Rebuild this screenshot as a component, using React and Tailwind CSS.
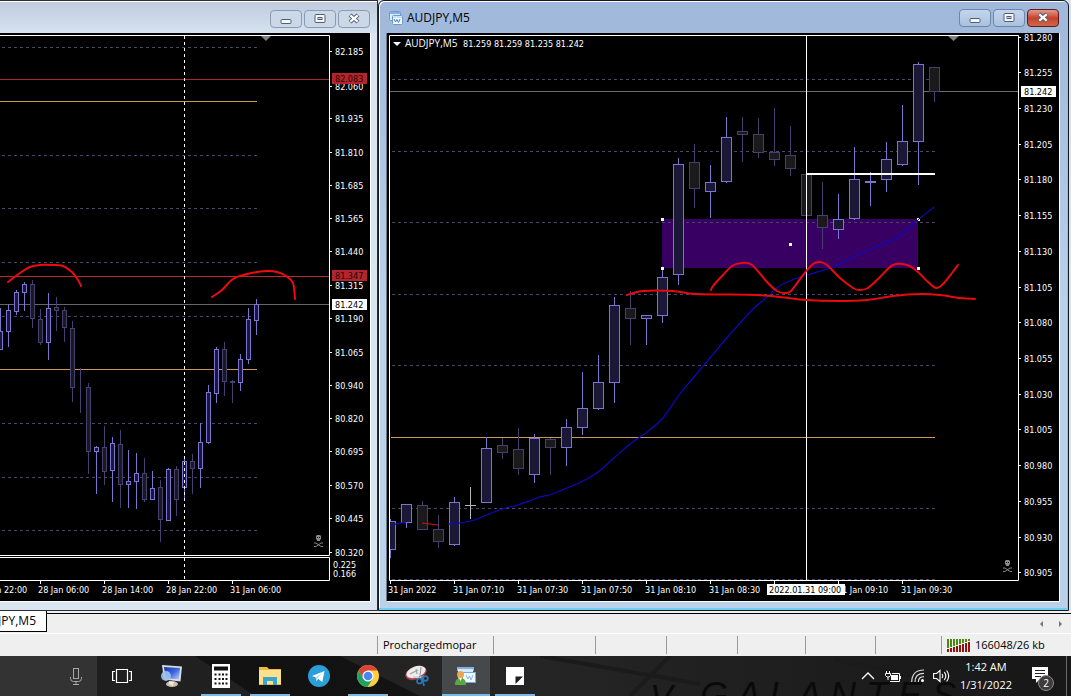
import React from "react";

const LEFT_CANDLES = [
  [0, 308, 331, 349, 349, 1], [8, 304, 310, 331, 347, 1], [16, 290, 292, 311, 315, 1],
  [24, 282, 284, 292, 311, 1], [32, 280, 284, 318, 328, 0], [40, 309, 319, 342, 345, 0],
  [48, 293, 308, 342, 360, 1], [56, 297, 307, 310, 331, 0], [64, 307, 310, 327, 342, 0],
  [72, 321, 328, 387, 402, 0], [80, 368, 386, 386, 413, 0], [88, 383, 387, 451, 474, 0],
  [96, 446, 447, 451, 494, 1], [104, 426, 447, 471, 485, 0], [112, 437, 443, 470, 502, 1],
  [120, 430, 444, 484, 508, 0], [128, 450, 481, 484, 508, 1], [136, 453, 473, 481, 509, 1],
  [144, 458, 473, 499, 502, 0], [152, 471, 488, 499, 499, 1], [160, 480, 487, 519, 542, 0],
  [168, 468, 469, 520, 520, 1], [176, 466, 469, 499, 516, 0], [184, 456, 461, 487, 499, 1],
  [192, 454, 461, 468, 494, 0], [200, 423, 442, 468, 488, 1], [208, 385, 392, 442, 444, 1],
  [216, 347, 349, 393, 403, 1], [224, 342, 349, 381, 396, 0], [232, 380, 381, 382, 403, 0],
  [240, 354, 359, 382, 391, 1], [248, 308, 319, 359, 364, 1], [256, 299, 304, 320, 335, 1],
];

const RIGHT_CANDLES = [
  [390, 519, 521, 549, 558, 1], [406, 504, 504, 522, 528, 1], [422, 501, 505, 529, 529, 0],
  [438, 515, 529, 541, 548, 0], [454, 497, 502, 544, 546, 1], [486, 437, 448, 502, 502, 1],
  [502, 438, 445, 452, 459, 0], [518, 428, 449, 468, 475, 0], [534, 434, 438, 474, 483, 1],
  [550, 438, 439, 447, 475, 0], [566, 419, 427, 447, 466, 1], [582, 372, 408, 427, 435, 1],
  [598, 355, 382, 408, 410, 1], [614, 297, 305, 382, 403, 1], [630, 291, 308, 318, 345, 0],
  [646, 315, 315, 318, 345, 1], [662, 268, 277, 315, 323, 1], [678, 158, 164, 274, 285, 1],
  [694, 144, 162, 188, 208, 0], [710, 165, 182, 191, 218, 1], [726, 117, 137, 181, 183, 1],
  [742, 117, 131, 134, 162, 0], [758, 118, 134, 152, 158, 0], [774, 108, 152, 159, 166, 0],
  [790, 126, 155, 168, 176, 0], [806, 174, 174, 215, 215, 0], [822, 182, 215, 227, 249, 0],
  [838, 194, 219, 229, 239, 1], [854, 147, 179, 218, 220, 1], [870, 172, 181, 182, 206, 1],
  [886, 142, 159, 179, 192, 1], [902, 105, 141, 164, 166, 1], [918, 62, 64, 141, 185, 1],
  [934, 67, 67, 91, 102, 0],
];

const LEFT_PRICES = [
  ["82.185", 51], ["82.060", 86], ["81.935", 118], ["81.810", 152], ["81.685", 185],
  ["81.565", 218], ["81.440", 251], ["81.315", 285], ["81.190", 318], ["81.065", 352],
  ["80.940", 385], ["80.820", 418], ["80.695", 451], ["80.570", 485], ["80.445", 518], ["80.320", 552],
];

const RIGHT_PRICES = [
  ["81.280", 37], ["81.255", 72], ["81.230", 108], ["81.205", 144], ["81.180", 179],
  ["81.155", 215], ["81.130", 251], ["81.105", 287], ["81.080", 322], ["81.055", 358],
  ["81.030", 394], ["81.005", 429], ["80.980", 465], ["80.955", 501], ["80.930", 537], ["80.905", 572],
];

/* Smooth curve through a list of points (Catmull-Rom to Bezier). */
function curve(p) {
  let d = `M${p[0][0]} ${p[0][1]}`;
  for (let i = 0; i < p.length - 1; i++) {
    const a = p[i - 1] || p[i];
    const b = p[i];
    const c = p[i + 1];
    const e = p[i + 2] || c;
    d += `C${b[0] + (c[0] - a[0]) / 6} ${b[1] + (c[1] - a[1]) / 6} ${c[0] - (e[0] - b[0]) / 6} ${c[1] - (e[1] - b[1]) / 6} ${c[0]} ${c[1]}`;
  }
  return d;
}

function Candles({ data, half }) {
  return data.map(([x, high, top, bottom, low, up]) => {
    const stroke = up ? "#7d74cf" : "#454070";
    return (
      <g key={x} stroke={stroke} shapeRendering="crispEdges">
        <path d={`M${x + 0.5} ${high}V${top}M${x + 0.5} ${bottom}V${low}`} />
        <rect x={x + 0.5 - half} y={top + 0.5} width={half * 2} height={bottom - top} fill={up ? "#1b1738" : "#1a1a1c"} />
      </g>
    );
  });
}

function Grid({ rows, x1, x2 }) {
  return rows.map((y) => (
    <path key={y} d={`M${x1} ${y + 0.5}H${x2}`} stroke="#47476a" strokeDasharray="3 3" />
  ));
}

function Prices({ data, x }) {
  return data.map(([label, y]) => (
    <g key={label}>
      <path d={`M${x - 5} ${y + 0.5}h2`} stroke="#fff" />
      <text x={x} y={y + 4} fill="#fff">{label}</text>
    </g>
  ));
}

function PriceTag({ x, y, label, bg, fg }) {
  return (
    <g>
      <rect x={x - 3} y={y - 6} width="35" height="11" fill={bg} />
      <text x={x} y={y + 3} fill={fg}>{label}</text>
    </g>
  );
}

function Skull({ x, y }) {
  return (
    <g transform={`translate(${x} ${y})`}>
      <path d="M3 0h3l1 1v3l-1 1v1H3V5L2 4V1z" fill="#8a8a8a" />
      <path d="M3 2h1v1H3zM5 2h1v1H5z" fill="#000" />
      <path d="M0 8h2l5 3.500h2M9 8H7l-5 3.500H0" stroke="#858585" fill="none" />
    </g>
  );
}

const chartClass = "block h-auto w-full bg-black [font-family:'DejaVu_Sans_Condensed','DejaVu_Sans',sans-serif] text-[9px]";

function LeftChart() {
  return (
    <svg viewBox="0 33 370 568" className={chartClass} fill="none" role="img" aria-label="Price chart">
      <Grid rows={[47, 155, 208, 262, 316, 423, 477, 530]} x1={2} x2={257} />
      <path d="M0 79.500H330" stroke="#a8282f" />
      <path d="M0 276.500H330" stroke="#b8282f" />
      <path d="M0 101.500H257" stroke="#cc9a58" />
      <path d="M0 369.500H257" stroke="#cc9a58" />
      <path d="M0 304.500H330" stroke="#666" />
      <Candles data={LEFT_CANDLES} half={2} />
      <path d="M184.500 36V579" stroke="#fff" strokeDasharray="3 3" />
      <path d="M0 35.500H329.500V555.500H0M0 557.500H329.500V580.500H0M40.500 581v3M104.500 581v3M168.500 581v3M232.500 581v3" stroke="#fff" />
      <path d="M261 36h10l-5 5z" fill="#808080" />
      <Skull x={314} y={535} />
      <Prices data={LEFT_PRICES} x={335} />
      <g fill="#fff">
        <text x="333" y="568">0.225</text>
        <text x="333" y="577">0.166</text>
        <text x="-24" y="593">27 Jan 22:00</text>
        <text x="38" y="593">28 Jan 06:00</text>
        <text x="102" y="593">28 Jan 14:00</text>
        <text x="166" y="593">28 Jan 22:00</text>
        <text x="230" y="593">31 Jan 06:00</text>
      </g>
      <PriceTag x={335} y={79} label="82.083" bg="#b3252b" fg="#2a0406" />
      <PriceTag x={335} y={276} label="81.347" bg="#b3252b" fg="#2a0406" />
      <PriceTag x={335} y={305} label="81.242" bg="#fff" fg="#000" />
      <g stroke="#f00a0f" strokeWidth="2" strokeLinecap="round">
        <path d={curve([[8, 282], [20, 273], [30, 267], [40, 265], [53, 265], [63, 266], [72, 272], [78, 280], [81, 286]])} />
        <path d={curve([[212, 297], [222, 290], [233, 279], [247, 274], [267, 271], [277, 272], [286, 276], [293, 283], [295, 299]])} />
      </g>
    </svg>
  );
}

function RightChart() {
  return (
    <svg viewBox="387 33 672 568" className={chartClass} fill="none" role="img" aria-label="AUDJPY five minute chart">
      <rect x="662" y="219" width="256" height="49" fill="#380063" />
      <Grid rows={[79, 151, 222, 294, 365, 508, 579]} x1={392} x2={935} />
      <path d="M390 91.500H1018" stroke="#6c6c6c" />
      <path d="M391 437.500H935" stroke="#cc9a58" />
      <Candles data={RIGHT_CANDLES} half={5} />
      <rect x="384" y="500" width="5" height="70" fill="#000" />
      <path d="M470.500 487V519M465 505.500h11" stroke="#b5b5b5" shapeRendering="crispEdges" />
      <g stroke="#0d08c4" strokeWidth="1.200">
        <path d={curve([[390, 525], [396, 524], [406, 522]])} />
        <path d={curve([[448, 524], [471, 521], [502, 509], [518, 505], [537, 498], [552, 494], [567, 488], [583, 481], [598, 472], [615, 457], [630, 444], [647, 432], [663, 418], [679, 395], [694, 377], [710, 358], [726, 339], [742, 321], [752, 310], [767, 297], [778, 287], [792, 280], [807, 275], [833, 267], [847, 260], [880, 245], [898, 237], [918, 220], [934, 207]])} />
      </g>
      <path d="M422 523l16 2" stroke="#d0101c" strokeWidth="1.200" />
      <path d="M806.500 36V580" stroke="#fff" />
      <path d="M807 174H935" stroke="#fff" strokeWidth="2" />
      <path d="M661 218h3v3h-3zM661 267h3v3h-3zM917 218h3v3h-3zM917 267h3v3h-3zM789 243h3v3h-3z" fill="#fff" />
      <path d="M917 221l3-3" stroke="#0b0614" />
      <path d="M389.500 580.500V35.500H1018.500V580.500zM390.500 581v3M454.500 581v3M518.500 581v3M582.500 581v3M646.500 581v3M710.500 581v3M774.500 581v3M838.500 581v3M902.500 581v3" stroke="#fff" />
      <path d="M948 36h11l-5.500 5z" fill="#808080" />
      <Skull x={1003} y={560} />
      <path d="M393 42h8l-4 4z" fill="#fff" />
      <Prices data={RIGHT_PRICES} x={1024} />
      <PriceTag x={1024} y={92} label="81.242" bg="#fff" fg="#000" />
      <g fill="#fff">
        <text x="405" y="47" className="[font-family:'Open_Sans',sans-serif] text-[10px]">AUDJPY,M5</text>
        <text x="463" y="47">81.259 81.259 81.235 81.242</text>
        <text x="388" y="593">31 Jan 2022</text>
        <text x="453" y="593">31 Jan 07:10</text>
        <text x="517" y="593">31 Jan 07:30</text>
        <text x="581" y="593">31 Jan 07:50</text>
        <text x="645" y="593">31 Jan 08:10</text>
        <text x="709" y="593">31 Jan 08:30</text>
        <text x="837" y="593">31 Jan 09:10</text>
        <text x="901" y="593">31 Jan 09:30</text>
      </g>
      <rect x="767" y="584" width="78" height="11" fill="#fff" />
      <text x="769" y="593" fill="#000">2022.01.31 09:00</text>
      <g stroke="#e80a0f" strokeWidth="2" strokeLinecap="round">
        <path d={curve([[711, 290], [713, 286], [722, 276], [732, 266], [742, 263], [752, 265], [767, 282], [777, 291], [784, 293], [791, 291], [803, 275], [813, 264], [820, 262], [827, 265], [840, 278], [853, 288], [859, 290], [868, 288], [880, 277], [893, 265], [907, 265], [918, 272], [927, 281], [936, 288], [943, 284], [952, 273], [958, 265]])} />
        <path d={curve([[627, 295], [643, 291], [673, 291], [697, 294], [757, 295], [780, 297], [807, 300], [837, 301], [867, 300], [893, 296], [920, 294], [940, 295], [960, 298], [975, 299]])} />
      </g>
    </svg>
  );
}

function WindowButtons({ active }) {
  const base = "flex h-[18px] w-8 items-center justify-center rounded-sm border";
  const plain = active
    ? `${base} border-[#6f86a8] bg-linear-to-b from-[#c3d5ec] to-[#a9c2e0]`
    : `${base} border-[#8a9bb5] bg-[#cbd8e8]`;
  const close = active
    ? `${base} border-[#5c1a1c] bg-linear-to-b from-[#e09a8c] via-[#c5402a] to-[#d0684a]`
    : plain;
  return (
    <div className="flex gap-0.5">
      <button className={plain} aria-label="Minimize">
        <svg width="12" height="12"><rect x="1" y="6.500" width="10" height="4" rx="1" fill="#f5f8fc" stroke="#535d70" /></svg>
      </button>
      <button className={plain} aria-label="Restore">
        <svg width="12" height="12" fill="#f5f8fc" stroke="#535d70"><rect x="1" y="1.500" width="10" height="8" rx="1" /><rect x="4" y="4.500" width="4" height="2" fill="#b9cbe2" /></svg>
      </button>
      <button className={close} aria-label="Close">
        <svg width="14" height="12"><path d="M3 2l8 7M11 2l-8 7" stroke="#535d70" strokeWidth="4.200" /><path d="M3.300 2.300l7.400 6.400M10.700 2.300l-7.400 6.400" stroke="#fff" strokeWidth="2.200" /></svg>
      </button>
    </div>
  );
}

function ChartGlyph() {
  return (
    <svg width="14" height="14" viewBox="0 0 14 14" fill="none" aria-hidden="true">
      <rect x=".5" y=".5" width="11" height="9" rx="1" fill="#dceafa" stroke="#6b9bd2" />
      <path d="M1 2h10" stroke="#6b9bd2" strokeWidth="1.500" />
      <rect x="3.500" y="4.500" width="10" height="9" rx="1" fill="#f4f9ff" stroke="#6b9bd2" />
      <path d="M4 6h9" stroke="#a5c8ec" />
      <path d="M5 8l1.500 3L8 8.500l1.500 3L11 8" stroke="#4a80c0" />
    </svg>
  );
}

const icons = {
  "Task View": (
    <svg width="20" height="16" fill="none" stroke="#fff" strokeWidth="1.200"><path d="M4.500 1.500h11v13h-11zM3 3.500H.6v9H3M17 3.500h2.400v9H17" /></svg>
  ),
  Computer: (
    <svg width="24" height="24" viewBox="0 0 24 24">
      <defs><linearGradient id="scr" x2="1" y2="1"><stop stopColor="#1b35a8" /><stop offset=".5" stopColor="#3c63e0" /><stop offset="1" stopColor="#c2d6fa" /></linearGradient></defs>
      <path d="M2 1l20 1.500-1.500 15L4 15.500z" fill="#d7dde8" /><path d="M4 3l16 1-1.200 11.500L5.500 14z" fill="url(#scr)" />
      <circle cx="6" cy="12" r="5" fill="#9fc3ee" opacity=".9" /><ellipse cx="12" cy="20" rx="6" ry="3" fill="#cdbfb0" /><path d="M9 17l5 1-1 4-4-2z" fill="#efe8dd" />
    </svg>
  ),
  Calculator: (
    <svg width="18" height="24" viewBox="0 0 18 24"><path d="M0 0h18v24H0z" fill="#fff" /><path d="M2 2.500h14v4H2zM2.500 9.500h2v2h-2zM6.500 9.500h2v2h-2zM10 9.500h2v2h-2zM13.500 9.500h2v2h-2zM2.500 14h2v2h-2zM6.500 14h2v2h-2zM10 14h2v2h-2zM13.500 14h2v2h-2zM2.500 18.500h2v2h-2zM6.500 18.500h2v2h-2zM10 18.500h2v2h-2zM13.500 18.500h2v2h-2z" fill="#111" /></svg>
  ),
  "File Explorer": (
    <svg width="22" height="20" viewBox="0 0 22 20"><path d="M0 1h8l2 2h12v16H0z" fill="#f0b93f" /><path d="M0 4h22v14H0z" fill="#fde08b" /><path d="M4 19v-8h14v8h-4v-4H8v4z" fill="#38a5cf" /></svg>
  ),
  Telegram: (
    <svg width="22" height="22" viewBox="0 0 22 22"><circle cx="11" cy="11" r="11" fill="#2a9fd8" /><path d="M4 11l12.500-5-2.200 11-4-3-2 2-.5-3.500z" fill="#fff" /><path d="M7.800 12.500L14 8l-4.500 5.500-1.200 2.500z" fill="#b4d8ee" /></svg>
  ),
  Chrome: (
    <svg width="22" height="22" viewBox="0 0 22 22"><circle cx="11" cy="11" r="11" fill="#ffcd41" /><path d="M1.500 5.500A11 11 0 0 1 20.500 5.500H11L6.200 13.700z" fill="#db4437" /><path d="M1.500 5.500A11 11 0 0 0 10.500 22L15.700 13.700 6.200 13.700z" fill="#1da261" /><circle cx="11" cy="11" r="5.500" fill="#fff" /><circle cx="11" cy="11" r="4.300" fill="#4687f4" /></svg>
  ),
  "Snipping Tool": (
    <svg width="26" height="24" viewBox="0 0 26 24" fill="none"><ellipse cx="12" cy="9" rx="11" ry="6.500" transform="rotate(-20 12 9)" fill="#a9424b" /><ellipse cx="12" cy="8" rx="10" ry="5.500" transform="rotate(-20 12 8)" fill="#efe9e9" /><path d="M6 10l8-4M12 5l1 5M17 3l-1 9 3 3" stroke="#9aa0a8" strokeWidth="1.200" /><path d="M9 13l8 1 3-2" stroke="#c8ccd2" strokeWidth="1.500" /><circle cx="15.500" cy="17" r="2.500" stroke="#2a78b8" strokeWidth="1.700" /><circle cx="21.500" cy="14.500" r="2.300" stroke="#2a78b8" strokeWidth="1.700" /><path d="M18 13l2 9" stroke="#2a78b8" strokeWidth="1.700" /></svg>
  ),
  MetaTrader: (
    <svg width="22" height="20" viewBox="0 0 22 20" fill="none"><path d="M2 1h17v4H2z" fill="#78b2e8" /><path d="M3 3h15v11H3z" fill="#d7e9fb" /><rect x="7.500" y="6.500" width="13" height="10" fill="#f2f8ff" stroke="#6ea9e2" /><path d="M11 9l2 4 1.500-3 1.500 4 2-5" stroke="#8ab8e8" /><circle cx="5.500" cy="8.500" r="3.500" fill="#eaa64c" /><path d="M0 19c0-5 2-7 5.500-7S11 14 11 19z" fill="#58a83c" /><path d="M4 12l1.500 3L7 12z" fill="#fff" /></svg>
  ),
  "Sticky Notes": (
    <svg width="18" height="18"><path d="M0 0h18v18H0z" fill="#fff" /><path d="M9.500 9.500H17L9.500 17z" fill="#1d1d1d" /></svg>
  ),
};

const OPEN = ["Calculator", "File Explorer", "Chrome", "Sticky Notes"];

function Taskbar() {
  return (
    <footer className="relative flex h-10 overflow-hidden bg-linear-to-r from-[#1e1e1e] via-[#252525] to-[#171717] text-white">
      <div className="absolute inset-0" aria-hidden="true">
        <svg className="h-full w-full" viewBox="0 0 1071 40" preserveAspectRatio="none" fill="none">
          <path d="M195 0H340L420 40H255z" fill="#080808" opacity=".6" />
          <path d="M540 0L700 28M670 0L630 40M835 4L960 28" stroke="#1b1b1b" strokeWidth="4" />
          <text x="650" y="52" fontSize="34" fontStyle="italic" fontFamily="Liberation Sans, sans-serif" fill="#0a0a0a">V</text>
          <text x="700" y="52" fontSize="36" fontStyle="italic" fontFamily="Liberation Sans, sans-serif" fill="#0a0a0a">G A L A N T E S</text>
        </svg>
      </div>
      <div className="relative flex w-[97px] items-center justify-end bg-[#333] pr-3">
        <button aria-label="Voice search" className="flex w-[18px] justify-center">
          <svg width="12" height="17" fill="none" stroke="#a8a8a8"><rect x="3.500" y=".5" width="5" height="10" /><path d="M.5 9v1.500q0 3 3 3h5q3 0 3-3V9M6 13.500V16M3 16.500h6" /></svg>
        </button>
      </div>
      <nav className="relative flex gap-px">
        {Object.entries(icons).map(([name, icon]) => (
          <button
            key={name}
            aria-label={name}
            className={name === "MetaTrader" ? "flex w-12 flex-col items-center bg-[#474849]" : name === "Task View" ? "flex w-[50px] flex-col items-center" : "flex w-12 flex-col items-center"}
          >
            <span className="flex flex-1 items-center">{icon}</span>
            <span className={name === "MetaTrader" ? "-mt-0.5 h-0.5 w-full bg-[#76b9ed]" : OPEN.includes(name) ? "-mt-0.5 h-0.5 w-10 bg-[#76b9ed]" : "-mt-0.5 h-0.5"} />
          </button>
        ))}
      </nav>
      <div className="relative ml-auto flex items-center pr-1">
        <button aria-label="Show hidden icons" className="mr-2.5"><svg width="14" height="8" fill="none" stroke="#fff" strokeWidth="1.300"><path d="M1 7l6-6 6 6" /></svg></button>
        <button aria-label="Battery" className="mr-2.5"><svg width="16" height="13" fill="none" stroke="#fff"><path d="M1.500 1v3M4.500 1v3M.5 3.500h5v2l-1.500 1.500h-2L.5 5.500zM3 7v3M5 11.500h9.500v-8H7M15.500 6v3" /><path d="M6 5h7v5H6z" fill="#fff" stroke="none" /></svg></button>
        <button aria-label="Network" className="mr-2"><svg width="14" height="14" viewBox="0 0 14 14" fill="none" stroke="#d8d8d8" strokeWidth="1.200"><path d="M.7 13Q1 1 13 1M4 13Q4 4.300 13 4.300M7.300 13Q7.300 7.600 13 7.600" /><circle cx="11.500" cy="11.500" r="1.500" fill="#fff" stroke="none" /></svg></button>
        <button aria-label="Volume" className="mr-2.5"><svg width="17" height="14" viewBox="0 0 17 14" fill="none" stroke="#fff" strokeWidth="1.100"><path d="M.6 4.500h3L7 1.500v11L3.600 9.500h-3zM9 5q1.500 2 0 4M11.300 3.200q3 3.800 0 7.600M13.600 1.500q4.200 5.500 0 11" /></svg></button>
        <button className="text-center text-[11px] leading-[18px]">
          <span className="block">1:42 AM</span>
          <span className="block">1/31/2022</span>
        </button>
        <button aria-label="Notifications, 2 new" className="relative mr-3 ml-4 h-[30px] w-[26px]">
          <svg width="18" height="20" className="absolute left-1 top-1" fill="#fff"><path d="M0 2h16v12H8l-4 4v-4H0z" /><path d="M3 5h10v1H3zM3 8h10v1H3zM3 11h6v1H3z" fill="#222" /></svg>
          <span className="absolute right-0 bottom-0 flex size-4 items-center justify-center rounded-full border border-[#8a8a8a] bg-[#3d3d3d] text-[10px] leading-none">2</span>
        </button>
        <span className="h-10 border-l border-[#666]" />
      </div>
    </footer>
  );
}

function Traffic() {
  return (
    <svg width="24" height="13" aria-hidden="true">
      {Array.from({ length: 8 }, (_, i) => (
        <g key={i}>
          <rect x={i * 3} y="0" width="2" height={9 - i} fill="#4c8a12" />
          <rect x={i * 3} y={10 - i} width="2" height={3 + i} fill="#8f1410" />
        </g>
      ))}
    </svg>
  );
}

export default function App() {
  return (
    <div className="flex min-h-screen flex-col bg-[#efefef] text-black [font-family:'Open_Sans','Noto_Sans',sans-serif] text-xs">
      <main className="grid grid-cols-[378fr_693fr] bg-[#d8e3ee]">
        <section className="flex flex-col border-y border-r border-[#2c3036] bg-[#d9e5f0] pr-[6px] pb-2">
          <header className="-mr-[6px] flex h-8 items-center justify-end border-t border-white bg-linear-to-b from-[#c0ccde] to-[#d5e2ef] pt-0.5 pr-[7px]">
            <WindowButtons />
          </header>
          <div className="border-r border-b border-white">
            <LeftChart />
          </div>
        </section>
        <section className="mr-0.5 flex flex-col rounded-t-md border border-[#15191f] bg-linear-to-b from-[#9fb8db] via-[#b9d1ea] to-[#b9d1ea] shadow-[inset_-1px_-2px_0_#6fd0f2,inset_1px_1px_0_#ffffff]">
          <header className="flex h-8 items-center justify-between pt-0.5 pr-[9px] pl-[10px]">
            <h1 className="flex items-center gap-1">
              <ChartGlyph />
              AUDJPY,M5
            </h1>
            <WindowButtons active />
          </header>
          <div className="mr-2 ml-[7px] border-r border-b border-l border-r-white border-b-white border-l-[#6d7885]">
            <RightChart />
          </div>
        </section>
      </main>
      <div className="flex h-[23px] items-start justify-between border-b border-white">
        <button className="flex h-[21px] w-[47px] items-center justify-end overflow-hidden border-r border-b border-black bg-white pr-[10px]">AUDJPY,M5</button>
        <div className="mt-0.5 flex h-5 flex-1 items-center justify-end gap-3 border-t border-black pr-2">
          <button aria-label="Scroll left"><svg width="6" height="8"><path d="M4 1v6L1 4z" fill="#777" /></svg></button>
          <button aria-label="Scroll right"><svg width="6" height="8"><path d="M2 1v6l3-3z" fill="#777" /></svg></button>
        </div>
      </div>
      <div className="grid h-[22px] grid-cols-[377fr_116fr_102fr_71fr_71fr_68fr_70fr_66fr_130fr] py-0.5 text-[11px] leading-[18px]">
        <span />
        <span className="border-l border-[#9a9a9a] pl-[5px]">Prochargedmopar</span>
        <span className="border-l border-[#9a9a9a]" />
        <span className="border-l border-[#9a9a9a]" />
        <span className="border-l border-[#9a9a9a]" />
        <span className="border-l border-[#9a9a9a]" />
        <span className="border-l border-[#9a9a9a]" />
        <span className="border-l border-[#9a9a9a]" />
        <span className="flex items-center gap-1 border-l border-[#9a9a9a] pl-[5px] whitespace-nowrap">
          <Traffic />
          166048/26 kb
        </span>
      </div>
      <Taskbar />
    </div>
  );
}
